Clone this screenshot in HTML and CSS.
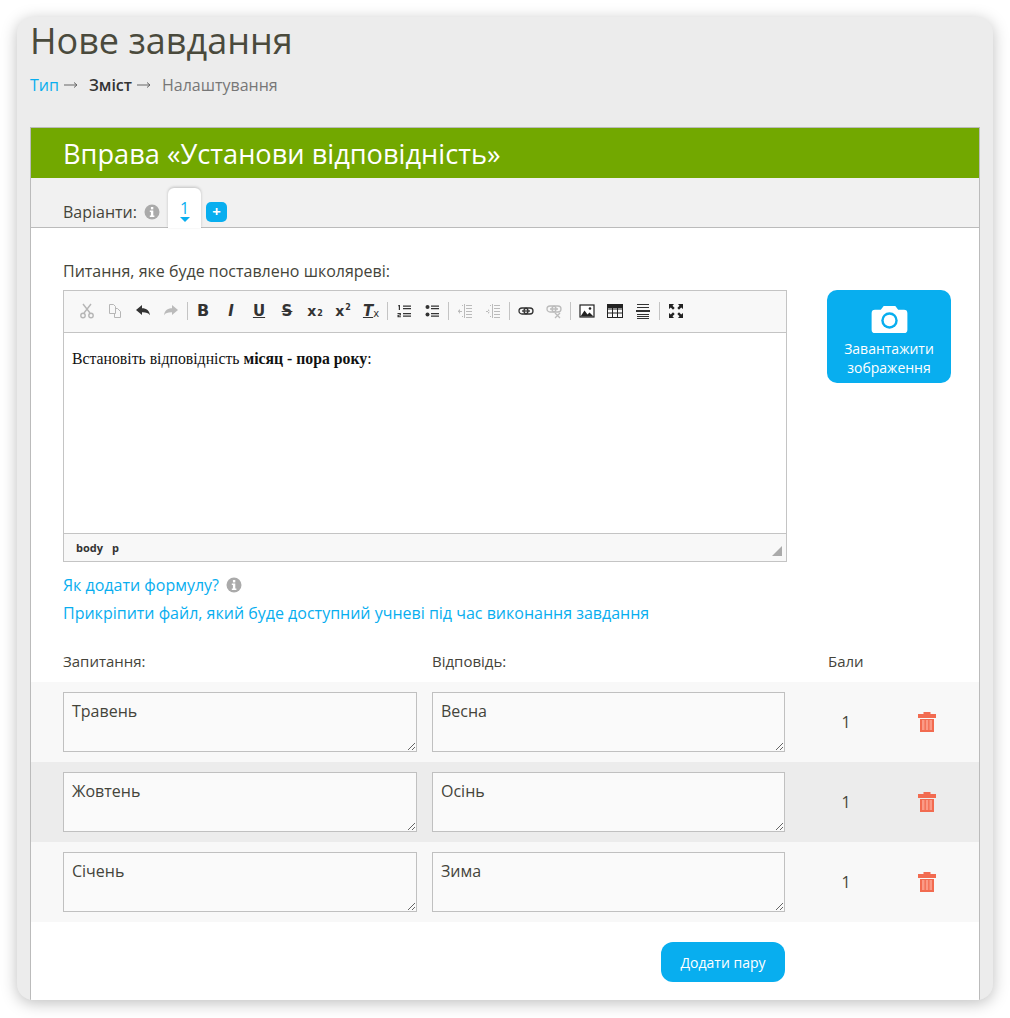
FILE: index.html
```html
<!DOCTYPE html>
<html lang="uk">
<head>
    <meta charset="UTF-8">
    <title>Нове завдання</title>
    <link rel="stylesheet" href="styles.css">
</head>
<body>
    <div class="window">
        <h1>Нове завдання</h1>
        <div class="steps">
            <a href="#">Тип</a>
            <svg class="arrow" viewBox="0 0 14 8" fill="none" stroke="#666"><path d="M0 4h13M10 1.500L13 4l-3 2.500"/></svg>
            <b>Зміст</b>
            <svg class="arrow" viewBox="0 0 14 8" fill="none" stroke="#666"><path d="M0 4h13M10 1.500L13 4l-3 2.500"/></svg>
            <span class="step-next">Налаштування</span>
        </div>

        <div class="panel">
            <div class="panel-title">Вправа «Установи відповідність»</div>

            <div class="variants">
                <span>Варіанти:</span>
                <svg class="info" viewBox="0 0 16 16"><circle cx="8" cy="8" r="7.5" fill="#aaa"/><rect x="6.9" y="3" width="2.4" height="2.4" fill="#fff"/><path d="M5.8 6.5h3.5v5h1.1v1.5H5.8v-1.5h1.1V8H5.8z" fill="#fff"/></svg>
                <div class="tab">1<i class="tab-arrow"></i></div>
                <div class="tab-add">+</div>
            </div>

            <div class="content">
                <div class="question-label">Питання, яке буде поставлено школяреві:</div>
                <div class="question">
                    <div class="editor">
                        <div class="toolbar">
                            <span class="tool off"><svg viewBox="0 0 16 16" fill="none" stroke="#222" stroke-width="1.4"><path d="M4 1l7 9M12 1L5 10"/><circle cx="4" cy="12.5" r="2.2"/><circle cx="12" cy="12.5" r="2.2"/></svg></span>
                            <span class="tool off"><svg viewBox="0 0 16 16" fill="none" stroke="#222"><path d="M2.5 1.5h4l2 2v7h-6zM8.500 5.500h2l3 3v6h-6v-4"/></svg></span>
                            <span class="tool"><svg viewBox="0 0 16 16" fill="#333"><path d="M1 7l6-5v3.300c4.500 0 7.500 2.500 8 7-1.600-2.300-4-3.100-8-3V12z"/></svg></span>
                            <span class="tool off"><svg viewBox="0 0 16 16" fill="#333"><path d="M15 7L9 2v3.300c-4.500 0-7.500 2.500-8 7 1.600-2.300 4-3.100 8-3V12z"/></svg></span>
                            <i class="sep"></i>
                            <span class="tool tool-b">B</span>
                            <span class="tool tool-i">I</span>
                            <span class="tool tool-u">U</span>
                            <span class="tool tool-s">S</span>
                            <span class="tool tool-x">x<small>2</small></span>
                            <span class="tool tool-x">x<small class="up">2</small></span>
                            <span class="tool tool-t"><em>T</em><small>x</small></span>
                            <i class="sep"></i>
                            <span class="tool"><svg viewBox="0 0 16 16" fill="#333"><path d="M7 2.500h8v1.300H7zM7 5h8v1.300H7zM7 10h8v1.300H7zM7 12.500h8v1.300H7zM2.500 2H4v5H2.800V3.200h-.8zM1.500 10h3.400v2.600H2.800v.7h2.100v1H1.500v-2.600h2.100V11H1.500z"/></svg></span>
                            <span class="tool"><svg viewBox="0 0 16 16" fill="#333"><circle cx="3.500" cy="4" r="2"/><circle cx="3.500" cy="11.500" r="2"/><path d="M7 2.500h8v1.300H7zM7 5h8v1.300H7zM7 10h8v1.300H7zM7 12.500h8v1.300H7z"/></svg></span>
                            <i class="sep"></i>
                            <span class="tool off"><svg viewBox="0 0 16 16" fill="#333"><path d="M9 2h6v1H9zM9 5h6v1H9zM9 8h6v1H9zM9 11h6v1H9zM9 14h6v1H9zM7 1h1v14H7zM1 8h4v1H1zM1 8l2-2v5zM5 2h1v1H5zM5 13h1v1H5z"/></svg></span>
                            <span class="tool off"><svg viewBox="0 0 16 16" fill="#333"><path d="M9 2h6v1H9zM9 5h6v1H9zM9 8h6v1H9zM9 11h6v1H9zM9 14h6v1H9zM7 1h1v14H7zM1 8h4v1H1zM5 8.500L3 6v5zM5 2h1v1H5zM5 13h1v1H5z"/></svg></span>
                            <i class="sep"></i>
                            <span class="tool"><svg viewBox="0 0 16 16" fill="none" stroke="#333" stroke-width="1.300"><rect x="1" y="5" width="9" height="6" rx="3"/><rect x="6" y="5" width="9" height="6" rx="3"/><path d="M4 8h8"/></svg></span>
                            <span class="tool off"><svg viewBox="0 0 16 16" fill="none" stroke="#333" stroke-width="1.300"><rect x="1" y="3" width="9" height="6" rx="3"/><rect x="6" y="3" width="9" height="6" rx="3"/><path d="M4 6h8M9 10l5 5M14 10l-5 5" /></svg></span>
                            <i class="sep"></i>
                            <span class="tool"><svg viewBox="0 0 16 16"><rect x="1" y="2" width="14" height="12" fill="#fff" stroke="#222" stroke-width="1.200"/><path d="M1.500 13.500l4-6 3 4 2-2 4 4z" fill="#222"/><circle cx="11" cy="5.500" r="1.300" fill="#222"/></svg></span>
                            <span class="tool"><svg viewBox="0 0 16 16" fill="none" stroke="#222"><rect x=".5" y="1.500" width="15" height="13"/><path d="M.5 6h15M.5 10h15M5.500 5v9M10.500 5v9"/><path d="M0 1h16v4H0z" fill="#222" stroke="none"/></svg></span>
                            <span class="tool"><svg viewBox="0 0 16 16" fill="#333"><path d="M2 1h12v1H2zM2 4h12v1H2zM1 7h14v2H1zM2 11h12v1H2zM2 13h12v1H2zM2 15h12v1H2z"/></svg></span>
                            <i class="sep"></i>
                            <span class="tool"><svg viewBox="0 0 16 16" fill="#222"><path d="M1 1h5L4.500 2.800 6.700 5 5 6.700 2.800 4.500 1 6zM15 1v5l-1.800-1.500L11 6.700 9.300 5l2.200-2.200L10 1zM1 15v-5l1.800 1.500L5 9.300 6.700 11l-2.200 2.200L6 15zM15 15h-5l1.500-1.800L9.300 11 11 9.300l2.200 2.200L15 10z"/></svg></span>
                        </div>
                        <div class="editor-text">Встановіть відповідність <b>місяц - пора року</b>:</div>
                        <div class="editor-path"><span>body</span><span>p</span><i class="grip"></i></div>
                    </div>
                    <div class="upload">
                        <svg class="camera" viewBox="0 0 38 30"><path d="M13 1h12l3 4h6a3.500 3.500 0 0 1 3.500 3.500v17A3.500 3.500 0 0 1 34 29H4a3.500 3.500 0 0 1-3.500-3.500v-17A3.500 3.500 0 0 1 4 5h6z" fill="#fff"/><circle cx="19" cy="16" r="8.500" fill="#08aeef"/><circle cx="19" cy="16" r="6" fill="#fff"/></svg>
                        <span>Завантажити зображення</span>
                    </div>
                </div>

                <div class="formula"><a href="#">Як додати формулу?</a>
                    <svg class="info" viewBox="0 0 16 16"><circle cx="8" cy="8" r="7.5" fill="#aaa"/><rect x="6.9" y="3" width="2.400" height="2.400" fill="#fff"/><path d="M5.800 6.500h3.500v5h1.100V13H5.800v-1.500h1.100V8H5.800z" fill="#fff"/></svg>
                </div>
                <div class="attach"><a href="#">Прикріпити файл, який буде доступний учневі під час виконання завдання</a></div>
            </div>

            <div class="pairs-head">
                <span>Запитання:</span>
                <span>Відповідь:</span>
                <span>Бали</span>
            </div>

            <div class="pair">
                <textarea>Травень</textarea>
                <textarea>Весна</textarea>
                <span class="score">1</span>
                <svg class="trash" viewBox="0 0 18 20"><path d="M5.500 0h7v2H18v4H0V2h5.500z" fill="#f26b50"/><path d="M2 7h14v13H2z" fill="#f26b50"/><path d="M4 8h2.500v10H4zM7.800 8h2.400v10H7.800zM11.500 8H14v10h-2.500z" fill="#fb9a86"/></svg>
            </div>
            <div class="pair">
                <textarea>Жовтень</textarea>
                <textarea>Осінь</textarea>
                <span class="score">1</span>
                <svg class="trash" viewBox="0 0 18 20"><path d="M5.500 0h7v2H18v4H0V2h5.500z" fill="#f26b50"/><path d="M2 7h14v13H2z" fill="#f26b50"/><path d="M4 8h2.500v10H4zM7.800 8h2.400v10H7.800zM11.500 8H14v10h-2.500z" fill="#fb9a86"/></svg>
            </div>
            <div class="pair">
                <textarea>Січень</textarea>
                <textarea>Зима</textarea>
                <span class="score">1</span>
                <svg class="trash" viewBox="0 0 18 20"><path d="M5.500 0h7v2H18v4H0V2h5.500z" fill="#f26b50"/><path d="M2 7h14v13H2z" fill="#f26b50"/><path d="M4 8h2.500v10H4zM7.800 8h2.400v10H7.800zM11.500 8H14v10h-2.500z" fill="#fb9a86"/></svg>
            </div>

            <div class="pairs-foot">
                <button class="add-pair">Додати пару</button>
            </div>
        </div>
    </div>
</body>
</html>
```

FILE: styles.css
```css
html, body {
    margin: 0;
    height: 1018px;
    overflow: hidden;
    background-color: #fff;
}

body {
    padding: 17px;
    box-sizing: border-box;
    font-family: "Open Sans", sans-serif;
    font-size: 16px;
    color: #44443a;
}

a {
    color: #08aeef;
    text-decoration: none;
}

.window {
    height: 983px;
    padding: 0 13px;
    overflow: hidden;
    background-color: #ececec;
    border-radius: 16px;
    box-shadow: 0 3px 16px rgba(0, 0, 0, 0.26);
}

h1 {
    margin: 0;
    padding-top: 1px;
    font-size: 36px;
    line-height: 46px;
    font-weight: 400;
    color: #4a4a3c;
}

.steps {
    display: flex;
    align-items: center;
    margin-top: 10px;
    font-size: 16px;
    line-height: 22px;
    color: #333;
}

.steps b {
    font-weight: 600;
}

.arrow {
    width: 14px;
    height: 8px;
    margin: 0 11px 0 5px;
}

.step-next {
    color: #777;
}

.panel {
    margin-top: 31px;
    min-height: 900px;
    background-color: #fff;
    border: 1px solid #bbb;
}

.panel-title {
    height: 50px;
    padding-left: 32px;
    font-size: 27.2px;
    line-height: 52px;
    color: #fff;
    background-color: #72a800;
}

.variants {
    display: flex;
    align-items: flex-end;
    height: 49px;
    padding-left: 32px;
    background-color: #f1f1f1;
    border-bottom: 1px solid #bbb;
}

.variants > span {
    margin-bottom: 4px;
}

.info {
    width: 16px;
    height: 16px;
}

.variants .info {
    margin: 0 8px 7px 7px;
}

.tab {
    position: relative;
    width: 33px;
    height: 40px;
    margin-bottom: -1px;
    line-height: 40px;
    text-align: center;
    color: #08aeef;
    background-color: #fff;
    border-radius: 6px 6px 0 0;
    box-shadow: 0 -1px 3px rgba(0, 0, 0, 0.2);
}

.tab-arrow {
    position: absolute;
    left: 12px;
    top: 29px;
    border: 5px solid transparent;
    border-top-color: #08aeef;
    border-bottom: 0;
}

.tab-add {
    width: 21px;
    height: 20px;
    margin: 0 0 5px 5px;
    font-size: 15px;
    font-weight: 700;
    line-height: 19px;
    text-align: center;
    color: #fff;
    background-color: #08aeef;
    border-radius: 5px;
}

.content {
    padding: 32px 28px 0 32px;
}

.question-label {
    line-height: 22px;
    margin-bottom: 8px;
}

.question {
    display: flex;
    justify-content: space-between;
    align-items: flex-start;
}

.editor {
    width: 722px;
    border: 1px solid #c4c4c4;
}

.toolbar {
    display: flex;
    align-items: center;
    height: 39px;
    padding: 0 0 2px 9px;
    background-color: #f8f8f8;
    border-bottom: 1px solid #c4c4c4;
}

.tool {
    display: flex;
    justify-content: center;
    align-items: center;
    width: 28px;
    height: 28px;
    font-family: "DejaVu Sans", sans-serif;
    font-size: 15px;
    font-weight: 700;
    line-height: 16px;
    color: #333;
}

.tool svg {
    width: 16px;
    height: 16px;
}

.tool.off {
    opacity: 0.3;
}

.tool-b {
    font-size: 16px;
}

.tool-i {
    font-style: italic;
}

.tool-u {
    text-decoration: underline;
}

.tool-s {
    text-decoration: line-through;
}

.tool-x {
    font-size: 14px;
}

.tool-x small {
    font-size: 8px;
    margin: 6px 0 0 1px;
}

.tool-x small.up {
    margin: -6px 0 0 1px;
}

.tool-t em {
    text-decoration: underline;
}

.tool-t small {
    font-size: 10px;
    font-weight: 400;
    margin-top: 6px;
}

.sep {
    width: 1px;
    height: 18px;
    margin: 0 2px;
    background-color: #c4c4c4;
}

.sep:first-of-type {
    margin-right: 1px;
}

.editor-text {
    height: 201px;
    padding: 16px 8px 0;
    box-sizing: border-box;
    font-family: "Liberation Serif", serif;
    font-size: 15.75px;
    line-height: 20px;
    color: #111;
    background-color: #fff;
    border-bottom: 1px solid #c4c4c4;
}

.editor-path {
    position: relative;
    display: flex;
    gap: 9px;
    height: 27px;
    padding-left: 12px;
    font-size: 11px;
    font-weight: 700;
    line-height: 27px;
    color: #333;
    background-color: #f8f8f8;
}

.grip {
    position: absolute;
    right: 4px;
    bottom: 5px;
    border-style: solid;
    border-width: 0 0 10px 10px;
    border-color: transparent transparent #aaa transparent;
}

.upload {
    display: flex;
    flex-direction: column;
    align-items: center;
    width: 124px;
    height: 93px;
    box-sizing: border-box;
    padding-top: 15px;
    font-size: 14px;
    line-height: 19px;
    text-align: center;
    color: #fff;
    background-color: #08aeef;
    border-radius: 10px;
}

.camera {
    width: 37px;
    height: 29px;
    margin-bottom: 5px;
}

.formula {
    display: flex;
    align-items: center;
    gap: 7px;
    margin-top: 12px;
    line-height: 22px;
}

.attach {
    margin-top: 6px;
    line-height: 22px;
}

.pairs-head {
    display: grid;
    grid-template-columns: 369px 396px 1fr;
    padding: 26px 0 10px 32px;
    font-size: 15px;
    line-height: 22px;
}

.pair {
    display: flex;
    align-items: center;
    height: 80px;
    padding-left: 32px;
    background-color: #f8f8f8;
}

.pair:nth-of-type(even) {
    background-color: #ececec;
}

textarea {
    width: 354px;
    height: 60px;
    box-sizing: border-box;
    margin: 0 15px 0 0;
    padding: 8px;
    font-family: "Open Sans", sans-serif;
    font-size: 16px;
    line-height: 20px;
    color: #44443a;
    background-color: #fafafa;
    border: 1px solid #c0c0c0;
    border-radius: 0;
}

textarea + textarea {
    width: 353px;
    margin-right: 0;
}

.score {
    width: 20px;
    margin-left: 51px;
    text-align: center;
}

.trash {
    width: 18px;
    height: 20px;
    margin-left: 62px;
}

.pairs-foot {
    display: flex;
    padding: 20px 0 0 630px;
}

.add-pair {
    width: 124px;
    height: 40px;
    font-family: "Open Sans", sans-serif;
    font-size: 14px;
    color: #fff;
    background-color: #08aeef;
    border: none;
    border-radius: 12px;
}
```
